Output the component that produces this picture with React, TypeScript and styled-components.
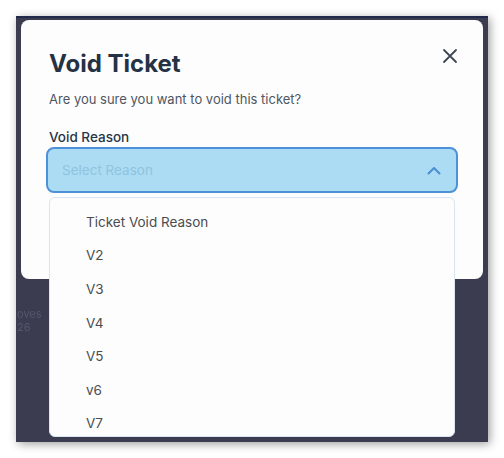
import React from "react";
import styled, { createGlobalStyle } from "styled-components";

const Global = createGlobalStyle`
  html, body { margin: 0; padding: 0; background: #ffffff; }
  body { font-family: Inter, "Noto Sans", Arial, sans-serif; -webkit-font-smoothing: antialiased; }
  * { box-sizing: border-box; }
`;

const Page = styled.div`
  width: 504px;
  height: 458px;
  padding: 16px;
`;

const Frame = styled.div`
  position: relative;
  width: 472px;
  height: 426px;
  background: #3b3c50;
  border-top: 2px solid #222a4c;
  box-shadow: 2px 2px 9px rgba(0, 0, 0, 0.38);
  padding: 2px 5px 0 5px;
  overflow: hidden;
`;

const Modal = styled.div`
  position: relative;
  z-index: 1;
  height: 259px;
  background: #fdfdfd;
  border-radius: 8px;
  padding: 29px 28px 0 28px;
  display: flex;
  flex-direction: column;
`;

const Header = styled.div`
  display: flex;
  align-items: flex-start;
  justify-content: space-between;
`;

const Title = styled.h2`
  margin: 0;
  font-size: 24px;
  line-height: 30px;
  font-weight: 700;
  color: #243244;
`;

const CloseButton = styled.button`
  border: none;
  background: none;
  padding: 0;
  margin: -3px -5px 0 0;
  width: 20px;
  height: 20px;
  display: flex;
  align-items: center;
  justify-content: center;
  color: #3e4652;
`;

const Subtitle = styled.p`
  margin: 10px 0 0 0;
  font-size: 13px;
  line-height: 20px;
  color: #4f5662;
`;

const Label = styled.label`
  margin-top: 18px;
  font-size: 13.5px;
  line-height: 20px;
  font-weight: 500;
  color: #27364a;
`;

const SelectWrap = styled.div`
  position: relative;
  margin: 0 -3px 0 -3px;
`;

const SelectBox = styled.div`
  height: 46px;
  border: 2px solid #4d91d9;
  border-radius: 8px;
  background: #acdcf4;
  display: flex;
  align-items: center;
  justify-content: space-between;
  padding: 0 15px 0 14px;
`;

const Placeholder = styled.span`
  font-size: 13.5px;
  color: #8fc3df;
`;

const Menu = styled.ul`
  position: absolute;
  top: calc(100% + 4px);
  left: 3px;
  right: 3px;
  height: 240px;
  margin: 0;
  padding: 7px 0 0 0;
  list-style: none;
  background: #fdfdfd;
  border: 1px solid #d8e6f3;
  border-radius: 6px;
  overflow: hidden;
`;

const Item = styled.li`
  height: 33.6px;
  display: flex;
  align-items: center;
  padding-left: 36px;
  font-size: 13.5px;
  color: #4a4c50;
`;

const Behind = styled.div`
  margin: 29px 0 0 -4px;
  font-size: 11px;
  line-height: 13px;
  color: #56576c;
  filter: blur(0.5px);
`;

const reasons = ["Ticket Void Reason", "V2", "V3", "V4", "V5", "v6", "V7"];

export default function App() {
  return (
    <>
      <Global />
      <Page>
        <Frame>
          <Modal>
            <Header>
              <Title>Void Ticket</Title>
              <CloseButton aria-label="Close">
                <svg width="16" height="16" viewBox="0 0 16 16" fill="none">
                  <path d="M2 2L14 14M14 2L2 14" stroke="currentColor" strokeWidth="1.8" strokeLinecap="round" />
                </svg>
              </CloseButton>
            </Header>
            <Subtitle>Are you sure you want to void this ticket?</Subtitle>
            <Label>Void Reason</Label>
            <SelectWrap>
              <SelectBox>
                <Placeholder>Select Reason</Placeholder>
                <svg width="14" height="9" viewBox="0 0 14 9" fill="none">
                  <path d="M1.5 7.5L7 2L12.5 7.5" stroke="#4a8dd0" strokeWidth="2" strokeLinecap="round" strokeLinejoin="round" />
                </svg>
              </SelectBox>
              <Menu>
                {reasons.map((r) => (
                  <Item key={r}>{r}</Item>
                ))}
              </Menu>
            </SelectWrap>
          </Modal>
          <Behind>
            oves
            <br />
            26
          </Behind>
        </Frame>
      </Page>
    </>
  );
}
